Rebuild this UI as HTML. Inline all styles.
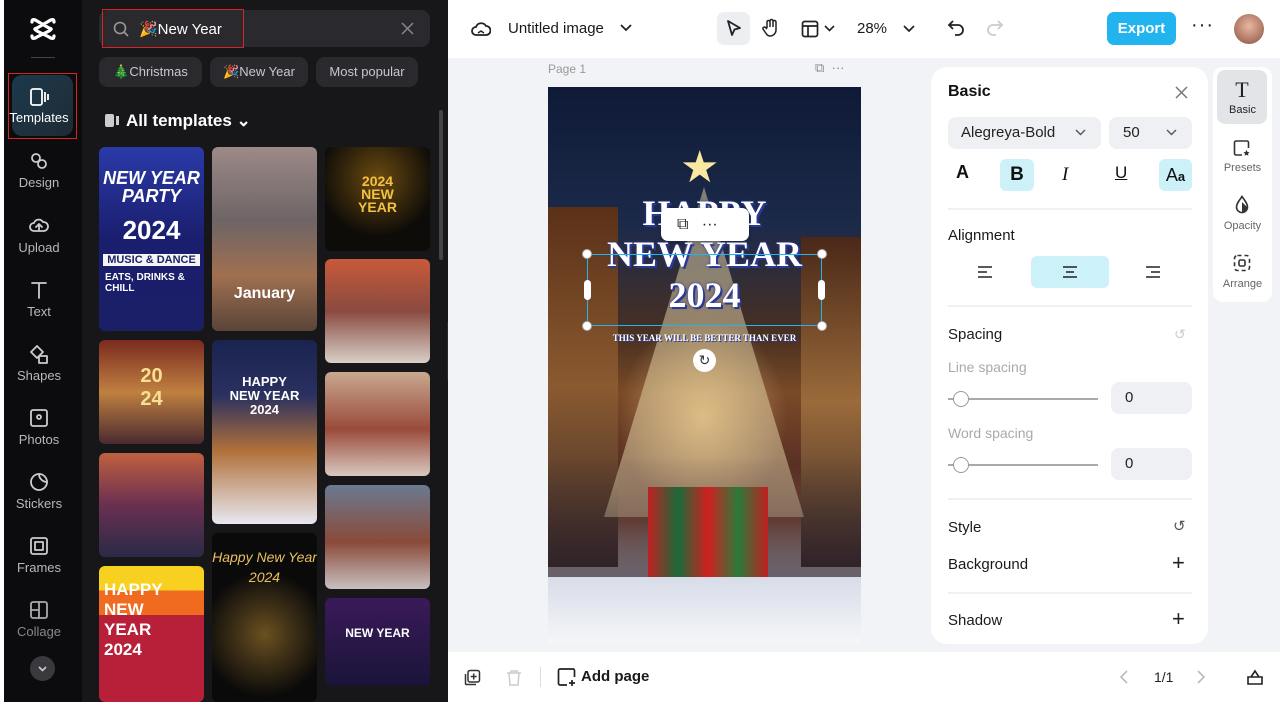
<!DOCTYPE html>
<html><head><meta charset="utf-8"><style>
*{box-sizing:border-box;margin:0;padding:0}
body{width:1280px;height:706px;overflow:hidden;background:#fff;font-family:"Liberation Sans",sans-serif;position:relative}
.abs{position:absolute}
.dark{left:4px;top:0;width:444px;height:702px;background:#17171a;border-radius:0 0 0 10px}
.nav{left:4px;top:0;width:78px;height:702px;background:#0c0c0e}
.navitem{position:absolute;left:0;width:78px;text-align:center;color:#b8b8bc;font-size:13px}
.navitem svg{display:block;margin:0 auto 4px}
.chip{position:absolute;top:57px;height:30px;background:#2a2a2e;border-radius:9px;color:#c8c8cc;font-size:13px;line-height:30px;text-align:center}
.t{position:absolute;border-radius:6px;overflow:hidden}
.ic{stroke:#222;fill:none;stroke-width:1.8;stroke-linecap:round;stroke-linejoin:round}
.lbl{font-size:15px;color:#1a1a1a;position:absolute}
.gray{color:#a8aab0}
</style></head><body>
<div class="abs dark"></div>
<div class="abs nav"></div>
<svg class="abs" style="left:29px;top:17px" width="28" height="24" viewBox="0 0 28 24"><path d="M3 5 C3 2 5 2 8 4 L20 11 C23 12 23 12 20 14 L8 20 C5 22 3 22 3 19 M25 5 C25 2 23 2 20 4 L8 11 C5 12 5 12 8 14 L20 20 C23 22 25 22 25 19" stroke="#fff" stroke-width="3.2" fill="none" stroke-linecap="round"/></svg>
<div class="abs" style="left:31px;top:57px;width:24px;height:1px;background:#444"></div>
<div class="abs" style="left:12px;top:75px;width:61px;height:61px;background:linear-gradient(135deg,#1c3a4c,#1f2a34);border-radius:10px"></div>
<div class="abs" style="left:8px;top:73px;width:69px;height:66px;border:1.5px solid #d82424"></div>
<div class="navitem" style="top:88px;color:#fff"><svg width="20" height="18" viewBox="0 0 20 18"><rect x="2" y="1" width="11" height="16" rx="2" stroke="#fff" stroke-width="1.8" fill="none"/><path d="M16 4v10M19 6v6" stroke="#fff" stroke-width="1.8"/></svg>Templates</div>
<div class="navitem" style="top:151px"><svg width="20" height="20" viewBox="0 0 20 20" class="ic" style="stroke:#ccc"><circle cx="7" cy="7" r="4"/><circle cx="13" cy="13" r="4"/></svg>Design</div>
<div class="navitem" style="top:216px"><svg width="20" height="20" viewBox="0 0 20 20" class="ic" style="stroke:#ccc"><path d="M5 15a4 4 0 010-8 5 5 0 019-1 4 4 0 011 9zM10 8v7M7 11l3-3 3 3"/></svg>Upload</div>
<div class="navitem" style="top:280px"><svg width="20" height="20" viewBox="0 0 20 20" class="ic" style="stroke:#ccc"><path d="M3 3h14M10 3v15"/></svg>Text</div>
<div class="navitem" style="top:344px"><svg width="20" height="20" viewBox="0 0 20 20" class="ic" style="stroke:#ccc"><path d="M2 8l6-6 6 6-6 6zM10 12h8v7h-8z"/></svg>Shapes</div>
<div class="navitem" style="top:408px"><svg width="20" height="20" viewBox="0 0 20 20" class="ic" style="stroke:#ccc"><rect x="2" y="2" width="16" height="16" rx="2"/><circle cx="10" cy="9" r="2"/></svg>Photos</div>
<div class="navitem" style="top:472px"><svg width="20" height="20" viewBox="0 0 20 20" class="ic" style="stroke:#ccc"><circle cx="10" cy="10" r="8"/><path d="M10 2a8 8 0 008 8"/></svg>Stickers</div>
<div class="navitem" style="top:536px"><svg width="20" height="20" viewBox="0 0 20 20" class="ic" style="stroke:#ccc"><rect x="2" y="2" width="16" height="16" rx="2"/><rect x="6" y="6" width="8" height="8"/></svg>Frames</div>
<div class="navitem" style="top:600px;color:#888"><svg width="20" height="20" viewBox="0 0 20 20" class="ic" style="stroke:#aaa"><rect x="2" y="2" width="16" height="16" rx="2"/><path d="M10 2v16M2 10h8"/></svg>Collage</div>
<div class="abs" style="left:30px;top:656px;width:25px;height:25px;border-radius:50%;background:#3a3a3e"></div>
<svg class="abs" style="left:36px;top:662px" width="13" height="13"><path d="M3 5l3.5 3.5L10 5" stroke="#ccc" stroke-width="1.6" fill="none"/></svg>

<div class="abs" style="left:99px;top:10px;width:331px;height:37px;background:#2a2a2e;border-radius:9px"></div>
<div class="abs" style="left:102px;top:9px;width:142px;height:39px;border:1.5px solid #d82424"></div>
<svg class="abs" style="left:113px;top:21px" width="16" height="16"><circle cx="7" cy="7" r="5.5" stroke="#999" stroke-width="1.6" fill="none"/><path d="M11 11l4 4" stroke="#999" stroke-width="1.6"/></svg>
<div class="abs" style="left:139px;top:20px;color:#fff;font-size:15px">🎉New Year</div>
<svg class="abs" style="left:401px;top:22px" width="13" height="13"><path d="M1 1l11 11M12 1L1 12" stroke="#888" stroke-width="1.5"/></svg>
<div class="chip" style="left:99px;width:103px">🎄Christmas</div>
<div class="chip" style="left:210px;width:98px">🎉New Year</div>
<div class="chip" style="left:316px;width:102px">Most popular</div>
<svg class="abs" style="left:104px;top:113px" width="16" height="15"><rect x="1" y="1" width="9" height="13" rx="2" fill="#ccc"/><rect x="12" y="3" width="3" height="9" fill="#ccc"/></svg>
<div class="abs" style="left:126px;top:111px;color:#fff;font-size:17px;font-weight:bold">All templates ⌄</div>
<div class="abs" style="left:439px;top:110px;width:4px;height:150px;background:#444;border-radius:2px"></div>

<div class="t" style="left:99px;top:147px;width:105px;height:184px;background:linear-gradient(180deg,#2a3aa8,#1a1e6e 50%,#1b1f66);color:#fff;font-weight:bold;text-align:center"><div style="margin-top:22px;font-size:18px;line-height:18px;font-style:italic">NEW YEAR<br>PARTY</div><div style="font-size:26px;margin-top:10px">2024</div><div style="font-size:11px;background:#f5f5f5;color:#1b1f66;margin:8px 4px 0">MUSIC &amp; DANCE</div><div style="font-size:10px;text-align:left;padding:6px 6px">EATS, DRINKS &amp; CHILL</div></div>
<div class="t" style="left:212px;top:147px;width:105px;height:184px;background:linear-gradient(180deg,#9c8a88,#6e6466 40%,#a07050 70%,#5a4438)"><div style="position:absolute;top:138px;width:100%;text-align:center;color:#fff;font-weight:bold;font-size:16px">January</div></div>
<div class="t" style="left:325px;top:147px;width:105px;height:104px;background:radial-gradient(circle at 50% 30%,#6a4a10,#0e0c08 65%)"><div style="position:absolute;top:28px;width:100%;text-align:center;color:#f4c040;font-weight:bold;font-size:14px;line-height:13px">2024<br>NEW<br>YEAR</div></div>
<div class="t" style="left:325px;top:259px;width:105px;height:104px;background:linear-gradient(180deg,#c85a3a,#8a4a40 50%,#d8d0c8)"></div>
<div class="t" style="left:99px;top:340px;width:105px;height:104px;background:linear-gradient(180deg,#7a2a20,#c08040 50%,#4a2a30)"><div style="position:absolute;top:25px;width:100%;text-align:center;color:#f8e090;font-weight:bold;font-size:20px">20<br>24</div></div>
<div class="t" style="left:212px;top:340px;width:105px;height:184px;background:linear-gradient(180deg,#1a2450,#2a3060 30%,#b0703a 60%,#e8e8f0)"><div style="position:absolute;top:35px;width:100%;text-align:center;color:#fff;font-weight:bold;font-size:13px;line-height:14px">HAPPY<br>NEW YEAR<br>2024</div></div>
<div class="t" style="left:325px;top:372px;width:105px;height:104px;background:linear-gradient(180deg,#c8a890,#9a4a3a 55%,#d8c8c0)"></div>
<div class="t" style="left:99px;top:453px;width:105px;height:104px;background:linear-gradient(180deg,#c06040,#6a3050 50%,#2a2a48)"></div>
<div class="t" style="left:325px;top:485px;width:105px;height:104px;background:linear-gradient(180deg,#6a7a90,#8a4a3a 55%,#c8c0c0)"></div>
<div class="t" style="left:99px;top:566px;width:105px;height:136px;background:linear-gradient(180deg,#f8d020 0 18%,#f06a20 18% 36%,#b8203a 36%)"><div style="position:absolute;left:5px;top:14px;color:#fff;font-weight:bold;font-size:17px;line-height:20px">HAPPY<br>NEW<br>YEAR<br>2024</div></div>
<div class="t" style="left:212px;top:533px;width:105px;height:169px;background:radial-gradient(circle at 50% 60%,#6a5020,#0a0a0a 55%)"><div style="position:absolute;top:14px;width:100%;text-align:center;color:#e8c060;font-size:14px;line-height:20px;font-style:italic">Happy New Year<br>2024</div></div>
<div class="t" style="left:325px;top:598px;width:105px;height:88px;background:linear-gradient(180deg,#3a1a5a,#1a1438)"><div style="position:absolute;top:28px;width:100%;text-align:center;color:#fff;font-weight:bold;font-size:12px">NEW YEAR</div></div>
<div class="abs" style="left:447px;top:322px;width:9px;height:58px;background:#2a2a2e;border-radius:0 6px 6px 0"></div>

<div class="abs" style="left:448px;top:0;width:832px;height:58px;background:#fff"></div>
<svg class="abs" style="left:471px;top:20px" width="20" height="18"><path d="M5 15a4 4 0 010-8 5.5 5.5 0 0110-1 4.5 4.5 0 010 9z" stroke="#222" stroke-width="1.8" fill="none"/><path d="M7 13l3-2 3 2" stroke="#222" stroke-width="1.5" fill="none"/></svg>
<div class="abs" style="left:508px;top:20px;font-size:15px;color:#1a1a1a">Untitled image</div>
<svg class="abs" style="left:620px;top:24px" width="12" height="9"><path d="M1 1l5 5 5-5" stroke="#222" stroke-width="1.8" fill="none"/></svg>
<div class="abs" style="left:717px;top:12px;width:33px;height:33px;background:#eceef2;border-radius:7px"></div>
<svg class="abs" style="left:725px;top:19px" width="18" height="19"><path d="M3 2l12 7-5.5 1.5L7 16z" stroke="#222" stroke-width="1.8" fill="none" stroke-linejoin="round"/></svg>
<svg class="abs" style="left:761px;top:18px" width="20" height="20"><path d="M6 10V4a1.5 1.5 0 013 0v5M9 9V3a1.5 1.5 0 013 0v6M12 9V4a1.5 1.5 0 013 0v8a6 6 0 01-6 6c-2 0-3-1-5-4l-2-3a1.5 1.5 0 012.5-1.5L6 11" stroke="#222" stroke-width="1.5" fill="none"/></svg>
<svg class="abs" style="left:801px;top:20px" width="18" height="18"><rect x="1.5" y="1.5" width="15" height="15" rx="2" stroke="#222" stroke-width="1.7" fill="none"/><path d="M1.5 6h15M7 6v10.5" stroke="#222" stroke-width="1.7"/></svg>
<svg class="abs" style="left:824px;top:25px" width="11" height="8"><path d="M1 1l4.5 4.5L10 1" stroke="#222" stroke-width="1.6" fill="none"/></svg>
<div class="abs" style="left:857px;top:20px;font-size:15px;color:#1a1a1a">28%</div>
<svg class="abs" style="left:903px;top:25px" width="12" height="8"><path d="M1 1l5 5 5-5" stroke="#222" stroke-width="1.7" fill="none"/></svg>
<svg class="abs" style="left:947px;top:19px" width="19" height="18"><path d="M6 2L2 6l4 4M2 6h9a5 5 0 010 10H8" stroke="#222" stroke-width="1.8" fill="none"/></svg>
<svg class="abs" style="left:985px;top:19px" width="19" height="18"><path d="M13 2l4 4-4 4M17 6H8a5 5 0 000 10h3" stroke="#ccc" stroke-width="1.8" fill="none"/></svg>
<div class="abs" style="left:1107px;top:12px;width:69px;height:33px;background:#22b4ee;border-radius:7px;color:#fff;font-size:15px;font-weight:bold;text-align:center;line-height:33px">Export</div>
<div class="abs" style="left:1191px;top:14px;font-size:20px;color:#222;letter-spacing:1px">···</div>
<div class="abs" style="left:1234px;top:14px;width:30px;height:30px;border-radius:50%;background:radial-gradient(circle at 50% 40%,#e8b8a0,#8a5040)"></div>

<div class="abs" style="left:448px;top:58px;width:832px;height:594px;background:#f1f3f6"></div>
<div class="abs" style="left:548px;top:62px;font-size:12px;color:#999">Page 1</div>
<div class="abs" style="left:815px;top:60px;font-size:13px;color:#888">⧉ &nbsp;···</div>
<div class="abs" style="left:548px;top:87px;width:313px;height:556px;overflow:hidden;background:linear-gradient(180deg,#0e1a36 0%,#1c2a4a 25%,#4a3020 45%,#7a4a28 55%,#5a3024 68%,#7a4a3a 78%,#d8dce8 90%,#f0f2f6 100%)">
 <div style="position:absolute;left:0;top:120px;width:70px;height:360px;background:linear-gradient(180deg,#5a3018,#8a5a30 50%,#3a2a2a)"></div>
 <div style="position:absolute;right:0;top:150px;width:60px;height:330px;background:linear-gradient(180deg,#4a2818,#9a6a3a 50%,#3a2a2a)"></div>
 <div style="position:absolute;left:56px;top:100px;width:0;height:0;border-left:100px solid transparent;border-right:100px solid transparent;border-bottom:330px solid #d8c8a0;opacity:.55"></div>
 <div style="position:absolute;left:70px;top:230px;width:170px;height:200px;background:radial-gradient(ellipse at 50% 50%,rgba(255,220,150,.6),rgba(0,0,0,0) 70%)"></div>
 <div style="position:absolute;left:0;top:370px;width:313px;height:120px;background:linear-gradient(180deg,rgba(40,30,40,0),rgba(40,30,40,.6))"></div>
 <div style="position:absolute;left:100px;top:400px;width:120px;height:95px;background:linear-gradient(90deg,#c02020,#1a6a3a 25%,#d02020 50%,#2a7a3a 75%,#c02020)"></div>
 <div style="position:absolute;left:0;top:490px;width:313px;height:66px;background:linear-gradient(180deg,#d8dce8,#f4f6f8)"></div>
</div>
<div class="abs" style="left:680px;top:142px;font-size:44px;color:#f8e8a0">★</div>
<div class="abs" style="left:548px;top:193px;width:313px;text-align:center;font-family:'Liberation Serif',serif;font-weight:bold;color:#fff;font-size:36px;line-height:41px;text-shadow:0 0 3px #2a3a9a,2px 2px 0 #2a3a9a">HAPPY<br>NEW YEAR<br>2024</div>
<div class="abs" style="left:587px;top:254px;width:235px;height:72px;border:1.5px solid #22b4ee"></div>
<div class="abs" style="left:582px;top:249px;width:10px;height:10px;border-radius:50%;background:#fff;border:1px solid #aaa"></div>
<div class="abs" style="left:817px;top:249px;width:10px;height:10px;border-radius:50%;background:#fff;border:1px solid #aaa"></div>
<div class="abs" style="left:582px;top:321px;width:10px;height:10px;border-radius:50%;background:#fff;border:1px solid #aaa"></div>
<div class="abs" style="left:817px;top:321px;width:10px;height:10px;border-radius:50%;background:#fff;border:1px solid #aaa"></div>
<div class="abs" style="left:584px;top:280px;width:7px;height:20px;border-radius:4px;background:#fff"></div>
<div class="abs" style="left:818px;top:280px;width:7px;height:20px;border-radius:4px;background:#fff"></div>
<div class="abs" style="left:661px;top:208px;width:88px;height:33px;background:#fff;border-radius:7px;box-shadow:0 1px 4px rgba(0,0,0,.2);font-size:16px;color:#222;line-height:33px;padding-left:16px">⧉ &nbsp;&nbsp;···</div>
<div class="abs" style="left:548px;top:333px;width:313px;text-align:center;font-family:'Liberation Serif',serif;font-weight:bold;color:#fff;font-size:9px;text-shadow:1px 1px 0 #2a3a9a">THIS YEAR WILL BE BETTER THAN EVER</div>
<div class="abs" style="left:693px;top:349px;width:23px;height:23px;border-radius:50%;background:#fff;text-align:center;line-height:23px;font-size:14px;color:#333">↻</div>

<div class="abs" style="left:931px;top:67px;width:277px;height:577px;background:#fff;border-radius:16px"></div>
<div class="abs" style="left:948px;top:83px;font-size:16px;font-weight:bold;color:#111">Basic</div>
<svg class="abs" style="left:1175px;top:86px" width="13" height="13"><path d="M1 1l11 11M12 1L1 12" stroke="#777" stroke-width="1.5"/></svg>
<div class="abs" style="left:948px;top:117px;width:153px;height:32px;background:#eef0f3;border-radius:8px;font-size:15px;color:#222;line-height:32px;padding-left:13px">Alegreya-Bold</div>
<svg class="abs" style="left:1075px;top:129px" width="11" height="8"><path d="M1 1l4.5 4.5L10 1" stroke="#555" stroke-width="1.4" fill="none"/></svg>
<div class="abs" style="left:1109px;top:117px;width:83px;height:32px;background:#eef0f3;border-radius:8px;font-size:15px;color:#222;line-height:32px;padding-left:14px">50</div>
<svg class="abs" style="left:1166px;top:129px" width="11" height="8"><path d="M1 1l4.5 4.5L10 1" stroke="#555" stroke-width="1.4" fill="none"/></svg>
<div class="abs" style="left:956px;top:162px;font-size:18px;font-weight:bold;color:#111">A</div>
<div class="abs" style="left:1000px;top:159px;width:34px;height:32px;background:#cdf1f8;border-radius:6px;text-align:center;line-height:32px;font-size:19px;font-weight:bold;color:#111">B</div>
<div class="abs" style="left:1062px;top:164px;font-size:19px;font-style:italic;font-family:'Liberation Serif',serif;color:#111">I</div>
<div class="abs" style="left:1115px;top:163px;font-size:17px;text-decoration:underline;color:#111">U</div>
<div class="abs" style="left:1159px;top:159px;width:33px;height:32px;background:#cdf1f8;border-radius:6px;text-align:center;line-height:32px;font-size:18px;color:#111">A<span style="font-size:13px;font-weight:bold">a</span></div>
<div class="abs" style="left:948px;top:208px;width:244px;height:2px;background:#eef0f3"></div>
<div class="lbl" style="left:948px;top:227px">Alignment</div>
<div class="abs" style="left:1031px;top:256px;width:78px;height:32px;background:#cdf1f8;border-radius:6px"></div>
<svg class="abs" style="left:977px;top:265px" width="18" height="14"><path d="M1 2h14M1 7h9M1 12h14" stroke="#222" stroke-width="1.6"/></svg>
<svg class="abs" style="left:1061px;top:265px" width="18" height="14"><path d="M2 2h14M5 7h8M2 12h14" stroke="#222" stroke-width="1.6"/></svg>
<svg class="abs" style="left:1144px;top:265px" width="18" height="14"><path d="M2 2h14M7 7h9M2 12h14" stroke="#222" stroke-width="1.6"/></svg>
<div class="abs" style="left:948px;top:305px;width:244px;height:2px;background:#eef0f3"></div>
<div class="lbl" style="left:948px;top:326px">Spacing</div>
<div class="abs" style="left:1174px;top:326px;color:#ccc;font-size:14px">↺</div>
<div class="lbl gray" style="left:948px;top:359px;font-size:14px">Line spacing</div>
<div class="abs" style="left:948px;top:398px;width:150px;height:2px;background:#aaa"></div>
<div class="abs" style="left:953px;top:391px;width:16px;height:16px;border-radius:50%;background:#fff;border:1px solid #999"></div>
<div class="abs" style="left:1111px;top:382px;width:81px;height:32px;background:#eef0f3;border-radius:8px;font-size:15px;line-height:32px;padding-left:14px;color:#222">0</div>
<div class="lbl gray" style="left:948px;top:425px;font-size:14px">Word spacing</div>
<div class="abs" style="left:948px;top:464px;width:150px;height:2px;background:#aaa"></div>
<div class="abs" style="left:953px;top:457px;width:16px;height:16px;border-radius:50%;background:#fff;border:1px solid #999"></div>
<div class="abs" style="left:1111px;top:448px;width:81px;height:32px;background:#eef0f3;border-radius:8px;font-size:15px;line-height:32px;padding-left:14px;color:#222">0</div>
<div class="abs" style="left:948px;top:498px;width:244px;height:2px;background:#eef0f3"></div>
<div class="lbl" style="left:948px;top:519px">Style</div>
<div class="abs" style="left:1173px;top:517px;color:#555;font-size:15px">↺</div>
<div class="lbl" style="left:948px;top:556px">Background</div>
<div class="abs" style="left:1172px;top:550px;color:#222;font-size:22px">+</div>
<div class="abs" style="left:948px;top:592px;width:244px;height:2px;background:#eef0f3"></div>
<div class="lbl" style="left:948px;top:612px">Shadow</div>
<div class="abs" style="left:1172px;top:606px;color:#222;font-size:22px">+</div>

<div class="abs" style="left:1213px;top:67px;width:59px;height:235px;background:#fff;border-radius:10px"></div>
<div class="abs" style="left:1217px;top:70px;width:50px;height:54px;background:#e2e4e8;border-radius:8px"></div>
<div class="abs" style="left:1217px;top:77px;width:50px;text-align:center;font-family:'Liberation Serif',serif;font-size:22px;color:#222">T</div>
<div class="abs" style="left:1213px;top:104px;width:59px;text-align:center;font-size:11px;color:#222">Basic</div>
<svg class="abs" style="left:1233px;top:139px" width="18" height="18"><path d="M9 16H3a1.5 1.5 0 01-1.5-1.5v-11A1.5 1.5 0 013 2h11a1.5 1.5 0 011.5 1.5V9" stroke="#333" stroke-width="1.6" fill="none"/><path d="M13.5 11l1 2 2 .3-1.5 1.4.4 2-1.9-1-1.9 1 .4-2-1.5-1.4 2-.3z" fill="#333"/></svg>
<div class="abs" style="left:1213px;top:162px;width:59px;text-align:center;font-size:11px;color:#666">Presets</div>
<svg class="abs" style="left:1234px;top:195px" width="16" height="19"><path d="M8 1.5C5 6 2.5 8.5 2.5 12a5.5 5.5 0 0011 0C13.5 8.5 11 6 8 1.5z" stroke="#333" stroke-width="1.6" fill="none"/><path d="M8 7v10a5 5 0 005-5" fill="#333"/></svg>
<div class="abs" style="left:1213px;top:220px;width:59px;text-align:center;font-size:11px;color:#666">Opacity</div>
<svg class="abs" style="left:1233px;top:254px" width="18" height="18"><rect x="1.5" y="1.5" width="15" height="15" rx="3" stroke="#333" stroke-width="1.6" fill="none" stroke-dasharray="4 3"/><rect x="6" y="6" width="6" height="6" rx="1.5" stroke="#333" stroke-width="1.6" fill="none"/></svg>
<div class="abs" style="left:1213px;top:278px;width:59px;text-align:center;font-size:11px;color:#666">Arrange</div>

<div class="abs" style="left:448px;top:652px;width:832px;height:54px;background:#fff"></div>
<svg class="abs" style="left:464px;top:669px" width="17" height="17"><rect x="4" y="1.5" width="11.5" height="11.5" rx="2" stroke="#333" stroke-width="1.5" fill="none"/><path d="M1.5 5v9.5a1 1 0 001 1H12M9.7 4.5v6M6.7 7.5h6" stroke="#333" stroke-width="1.5" fill="none"/></svg>
<svg class="abs" style="left:506px;top:669px" width="16" height="17"><path d="M1 4h14M5 4V2h6v2M3 4l1 12h8l1-12" stroke="#ccc" stroke-width="1.5" fill="none"/></svg>
<div class="abs" style="left:540px;top:667px;width:1px;height:20px;background:#ddd"></div>
<svg class="abs" style="left:557px;top:668px" width="19" height="19"><path d="M10 17H3a1.5 1.5 0 01-1.5-1.5v-13A1.5 1.5 0 013 1h13a1.5 1.5 0 011.5 1.5V9M15 12v6M12 15h6" stroke="#222" stroke-width="1.7" fill="none"/></svg>
<div class="abs" style="left:581px;top:668px;font-size:15px;color:#1a1a1a;font-weight:bold">Add page</div>
<svg class="abs" style="left:1119px;top:670px" width="10" height="14"><path d="M8 1L2 7l6 6" stroke="#bbb" stroke-width="1.6" fill="none"/></svg>
<div class="abs" style="left:1154px;top:669px;font-size:14px;color:#222">1/1</div>
<svg class="abs" style="left:1196px;top:670px" width="10" height="14"><path d="M2 1l6 6-6 6" stroke="#bbb" stroke-width="1.6" fill="none"/></svg>
<svg class="abs" style="left:1246px;top:668px" width="18" height="18"><path d="M2 9h14v7H2zM5 9l4-6 4 6" stroke="#222" stroke-width="1.6" fill="none"/></svg>
</body></html>
